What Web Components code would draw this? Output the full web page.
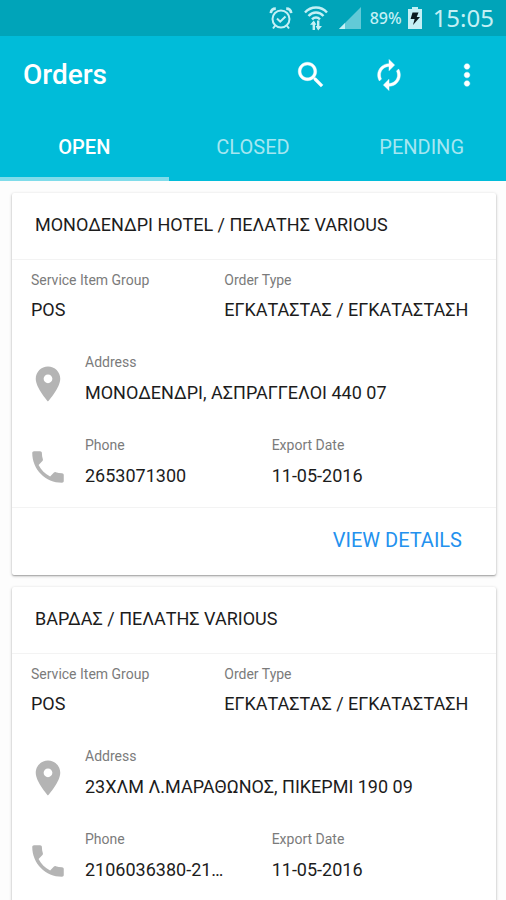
<!DOCTYPE html>
<html lang="en">
<head>
<meta charset="utf-8">
<meta name="viewport" content="width=device-width, initial-scale=1">
<title>Orders</title>
<style>
  body { margin: 0; background: #fdfdfd; font-family: Roboto, "Noto Sans", sans-serif; color: #1c1c1c; }
</style>
</head>
<body>
<orders-app>
  <status-bar slot="status" battery="89%" time="15:05"></status-bar>
  <app-bar slot="bar" heading="Orders"></app-bar>
  <tab-strip slot="bar" tabs="OPEN,CLOSED,PENDING" selected="0"></tab-strip>
  <order-card>
    <span slot="title">ΜΟΝΟΔΕΝΔΡΙ HOTEL / ΠΕΛΑΤΗΣ VARIOUS</span>
    <order-field slot="summary" label="Service Item Group">POS</order-field>
    <order-field slot="summary" label="Order Type">ΕΓΚΑΤΑΣΤΑΣ / ΕΓΚΑΤΑΣΤΑΣΗ</order-field>
    <order-field slot="address" label="Address">ΜΟΝΟΔΕΝΔΡΙ, ΑΣΠΡΑΓΓΕΛΟΙ 440 07</order-field>
    <order-field slot="phone" label="Phone">2653071300</order-field>
    <order-field slot="phone" label="Export Date">11-05-2016</order-field>
  </order-card>
  <order-card>
    <span slot="title">ΒΑΡΔΑΣ / ΠΕΛΑΤΗΣ VARIOUS</span>
    <order-field slot="summary" label="Service Item Group">POS</order-field>
    <order-field slot="summary" label="Order Type">ΕΓΚΑΤΑΣΤΑΣ / ΕΓΚΑΤΑΣΤΑΣΗ</order-field>
    <order-field slot="address" label="Address">23ΧΛΜ Λ.ΜΑΡΑΘΩΝΟΣ, ΠΙΚΕΡΜΙ 190 09</order-field>
    <order-field slot="phone" label="Phone">2106036380-21…</order-field>
    <order-field slot="phone" label="Export Date">11-05-2016</order-field>
  </order-card>
</orders-app>

<script>
class BaseElement extends HTMLElement {
  render(html) {
    this.attachShadow({ mode: "open" }).innerHTML = html;
  }
}

customElements.define("orders-app", class extends BaseElement {
  connectedCallback() {
    this.render(`
      <style>
        :host { display: flex; flex-direction: column; height: 100vh; }
        header { flex: none; background: #00bcd9; color: #fff; }
        main {
          flex: 1; min-height: 0; overflow-y: auto; scrollbar-width: none;
          display: flex; flex-direction: column; gap: 12px; padding: 12px 10px 12px 12px;
        }
      </style>
      <header><slot name="status"></slot><slot name="bar"></slot></header>
      <main><slot></slot></main>`);
  }
});

customElements.define("status-bar", class extends BaseElement {
  connectedCallback() {
    this.render(`
      <style>
        :host {
          display: flex; align-items: center; justify-content: flex-end; height: 36px;
          padding-right: 12px; background: #00a4b9; color: #c4f0f5;
          font-family: "Noto Sans", sans-serif;
        }
        svg { flex: none; display: block; }
        .alarm { margin-right: 11px; }
        .wifi { margin-right: 10px; }
        .signal { margin-right: 8px; }
        .level { font-size: 16px; font-weight: 500; line-height: 24px; margin-right: 5px; }
        .battery { margin-right: 10px; }
        .time { font-size: 24px; line-height: 36px; }
      </style>
      <svg class="alarm" width="24" height="24" viewBox="0 0 24 24" fill="none" stroke="currentColor" stroke-width="2">
        <circle cx="12" cy="13" r="8.5"/>
        <path d="M8 12.5l3.2 3.2 5.3-5.2"/>
        <path d="M1.8 7.2C2 4.5 4 2.6 6.8 2.6M22.200 7.200C22 4.500 20 2.600 17.200 2.600" stroke-width="2.600"/>
        <path d="M6.200 19.500L4 22.500M17.800 19.500l2.200 3"/>
      </svg>
      <svg class="wifi" width="24" height="26" viewBox="0 0 24 26" fill="none" stroke="currentColor" stroke-width="2.400">
        <path d="M1 7.500C7 .800 17 .800 23 7.500M4.500 11c4.200-4.600 10.800-4.600 15 0M8 14.300c2.400-2.400 5.600-2.400 8 0"/>
        <path d="M9.800 25v-8M14.200 15.500v8"/>
        <path d="M6 19.800l3.800-4.300 2.600 4.300zM11.600 21l2.600 4.500 3.800-4.500z" fill="currentColor" stroke="none"/>
      </svg>
      <svg class="signal" width="24" height="24" viewBox="0 0 24 24" fill="currentColor">
        <path d="M1 23L23 1v22z" opacity=".5"/><path d="M1 23l6-6v6z"/>
      </svg>
      <span class="level">${this.getAttribute("battery")}</span>
      <svg class="battery" width="16" height="24" viewBox="0 0 16 24">
        <path d="M5 1h6v2h4v20H1V3h4z" fill="currentColor"/>
        <path d="M5.500 6.500h6L9.700 11h3.300l-7 8 1.600-6H3.600z" fill="#0a1c20"/>
      </svg>
      <span class="time">${this.getAttribute("time")}</span>`);
  }
});

customElements.define("app-bar", class extends BaseElement {
  connectedCallback() {
    this.render(`
      <style>
        :host { display: flex; align-items: center; height: 78px; padding-left: 23px; }
        h1 { flex: 1; margin: 0; font-size: 28px; font-weight: 500; line-height: 36px; }
        button {
          width: 78px; height: 78px; padding: 0; border: 0; background: none; color: inherit;
          display: grid; place-items: center; cursor: pointer;
        }
        svg { fill: currentColor; stroke: currentColor; stroke-width: .3; display: block; }
      </style>
      <h1>${this.getAttribute("heading")}</h1>
      <button type="button" aria-label="Search"><svg width="34" height="34" viewBox="0 0 24 24"><path d="M15.500 14h-.79l-.28-.27C15.410 12.590 16 11.110 16 9.500 16 5.910 13.090 3 9.500 3S3 5.910 3 9.500 5.910 16 9.500 16c1.610 0 3.090-.59 4.230-1.570l.27.28v.79l5 4.990L20.490 19l-4.990-5zm-6 0C7.010 14 5 11.990 5 9.500S7.010 5 9.500 5 14 7.010 14 9.500 11.990 14 9.500 14z"/></svg></button>
      <button type="button" aria-label="Refresh"><svg width="34" height="34" viewBox="0 0 24 24"><path d="M12 6v3l4-4-4-4v3c-4.420 0-8 3.580-8 8 0 1.570.46 3.030 1.240 4.260L6.700 14.800c-.45-.83-.7-1.790-.7-2.800 0-3.310 2.690-6 6-6zm6.760 1.740L17.300 9.200c.44.84.7 1.790.7 2.800 0 3.310-2.690 6-6 6v-3l-4 4 4 4v-3c4.420 0 8-3.580 8-8 0-1.570-.46-3.030-1.240-4.260z"/></svg></button>
      <button type="button" aria-label="More options"><svg width="34" height="34" viewBox="0 0 24 24"><path d="M12 8c1.100 0 2-.9 2-2s-.9-2-2-2-2 .9-2 2 .9 2 2 2zm0 2c-1.100 0-2 .9-2 2s.9 2 2 2 2-.9 2-2-.9-2-2-2zm0 6c-1.100 0-2 .9-2 2s.9 2 2 2 2-.9 2-2-.9-2-2-2z"/></svg></button>`);
  }
});

customElements.define("tab-strip", class extends BaseElement {
  connectedCallback() {
    const selected = Number(this.getAttribute("selected"));
    const tabs = this.getAttribute("tabs").split(",").map((name, i) =>
      `<button type="button" role="tab" aria-selected="${i === selected}">${name}</button>`).join("");
    this.render(`
      <style>
        :host { display: block; }
        div { display: grid; grid-template-columns: repeat(3, 1fr); }
        button {
          height: 67px; padding: 2px 0 0; border: 0; border-bottom: 4px solid transparent; background: none;
          font: 400 20px/24px Roboto, sans-serif; color: #a5e6f1; cursor: pointer;
        }
        button[aria-selected="true"] { color: #fff; font-weight: 500; border-bottom-color: #80dcea; }
      </style>
      <div role="tablist">${tabs}</div>`);
    const buttons = this.shadowRoot.querySelectorAll("button");
    buttons.forEach(b => b.addEventListener("click", () =>
      buttons.forEach(o => o.setAttribute("aria-selected", String(o === b)))));
  }
});

customElements.define("order-field", class extends BaseElement {
  connectedCallback() {
    this.render(`
      <style>
        :host { display: flex; flex-direction: column; gap: 8px; min-width: 0; }
        :host([slot="address"]), :host([slot="phone"]) { gap: 9px; }
        .label { font-size: 14px; line-height: 20px; color: #7b7b7b; }
        .value { font-size: 18px; line-height: 24px; white-space: nowrap; }
      </style>
      <span class="label">${this.getAttribute("label")}</span>
      <span class="value"><slot></slot></span>`);
  }
});

customElements.define("order-card", class extends BaseElement {
  connectedCallback() {
    this.render(`
      <style>
        :host {
          display: block; flex: none; background: #fff; border-radius: 2px;
          box-shadow: 0 1px 3px rgba(0,0,0,.3), 0 1px 1px rgba(0,0,0,.15);
        }
        h2 {
          margin: 0; padding: 20px 23px 22px; border-bottom: 1px solid #f3f3f3;
          font-size: 18px; font-weight: 400; line-height: 24px;
        }
        .body { display: flex; flex-direction: column; gap: 30px; padding: 10px 19px 19px 15px; }
        .summary { display: grid; grid-template-columns: 13fr 17fr; padding-left: 4px; }
        .row { display: flex; align-items: flex-end; gap: 16px; }
        .pair { flex: 1; display: grid; grid-template-columns: minmax(0, 10fr) minmax(0, 11fr); }
        svg { flex: none; display: block; fill: #b4b4b4; }
        footer { display: flex; justify-content: flex-end; border-top: 1px solid #f3f3f3; padding: 20px 34px 23px 19px; }
        button {
          padding: 0; border: 0; background: none; color: #2391ee; cursor: pointer;
          font: 400 20px/24px Roboto, sans-serif;
        }
      </style>
      <h2><slot name="title"></slot></h2>
      <div class="body">
        <div class="summary"><slot name="summary"></slot></div>
        <div class="row">
          <svg width="42" height="42" viewBox="0 0 24 24"><path d="M12 2C8.130 2 5 5.130 5 9c0 5.250 7 13 7 13s7-7.750 7-13c0-3.870-3.130-7-7-7zm0 9.500c-1.380 0-2.500-1.120-2.500-2.500s1.120-2.500 2.500-2.500 2.500 1.120 2.500 2.500-1.120 2.500-2.500 2.500z"/></svg>
          <slot name="address"></slot>
        </div>
        <div class="row">
          <svg width="42" height="42" viewBox="0 0 24 24"><path d="M6.620 10.790c1.440 2.830 3.760 5.140 6.590 6.590l2.200-2.200c.27-.27.67-.36 1.020-.24 1.120.37 2.330.57 3.570.57.55 0 1 .45 1 1V20c0 .55-.45 1-1 1-9.390 0-17-7.610-17-17 0-.55.45-1 1-1h3.500c.55 0 1 .45 1 1 0 1.250.2 2.450.57 3.570.11.35.03.74-.25 1.020l-2.200 2.200z"/></svg>
          <div class="pair"><slot name="phone"></slot></div>
        </div>
      </div>
      <footer><button type="button">VIEW DETAILS</button></footer>`);
  }
});
</script>
</body>
</html>
